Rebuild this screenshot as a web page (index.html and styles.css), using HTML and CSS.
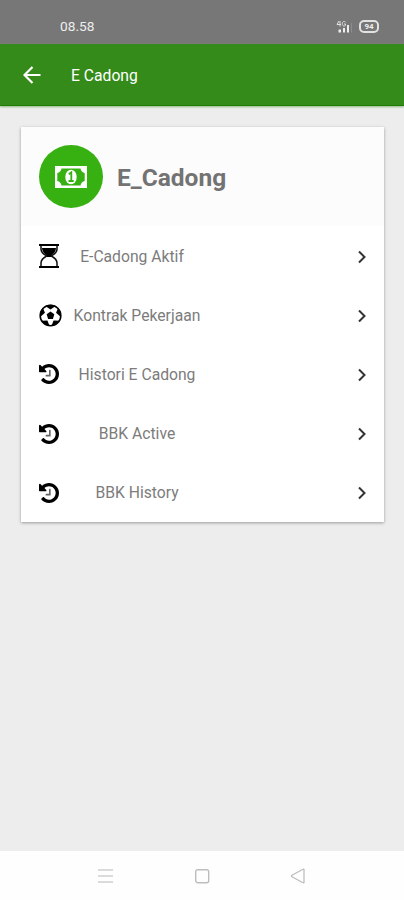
FILE: index.html
```html
<!DOCTYPE html>
<html lang="id">
<head>
<meta charset="utf-8">
<title>E Cadong</title>
<link rel="stylesheet" href="styles.css">
</head>
<body>
<svg class="defs" aria-hidden="true">
  <symbol id="history" viewBox="0 128 1536 1536"><path d="M1536 896q0 156-61 298t-164 245-245 164-298 61q-172 0-327-72.5t-264-204.5q-7-10-6.5-22.5t8.5-20.5l137-138q10-9 25-9 16 2 23 12 73 95 179 147t225 52q104 0 198.500-40.500t163.500-109.500 109.500-163.500 40.500-198.500-40.500-198.500-109.500-163.500-163.500-109.500-198.500-40.500q-98 0-188 35.500t-160 101.500l137 138q31 30 14 69-17 40-59 40h-448q-26 0-45-19t-19-45v-448q0-42 40-59 39-17 69 14l130 129q107-101 244.500-156.500t284.500-55.500q156 0 298 61t245 164 164 245 61 298z"/><path opacity=".6" d="M896 608v448q0 14-9 23t-23 9h-320q-14 0-23-9t-9-23v-64q0-14 9-23t23-9h224v-352q0-14 9-23t23-9h64q14 0 23 9t9 23z"/></symbol>
  <symbol id="chevron" viewBox="0 0 10 14"><path d="M2 1.500 7.500 7 2 12.500" fill="none" stroke="#333" stroke-width="2"/></symbol>
</svg>
<div class="screen">
  <div class="status">
    <span class="clock">08.58</span>
    <span class="indicators">
      <svg width="16" height="14" viewBox="0 0 16 14"><path d="M3 1 1 4.500h4M4 1v5.500M9.500 2.200C8 .5 6.300 1.800 6.300 3.800s2 3.200 3.200 1.500V4H8" fill="none" stroke="#e0e0e0"/><path d="M2.500 9.500h2.500v3H2.500zM7 8h2v4.500H7zM11 5h2v7.500h-2z" fill="#eee"/><path d="M15 3h1v9.500h-1z" fill="#8c8c8c"/></svg>
      <span class="battery">94</span>
    </span>
  </div>
  <header class="appbar">
    <svg width="18" height="18" viewBox="0 0 18 18"><path d="M17.500 9H2M9.500 1 1.500 9l8 8" fill="none" stroke="#fff" stroke-width="2.200"/></svg>
    <h1>E Cadong</h1>
  </header>
  <main class="content">
    <section class="card">
      <div class="card-head">
        <span class="avatar">
          <svg width="32" height="22" viewBox="0 0 32 22"><path fill="#fff" fill-rule="evenodd" d="M0 0h32v22H0zM6.500 2.500C6 5 4.500 6.500 2.300 7v8c2.200.5 3.700 2 4.200 4.500h19c.5-2.500 2-4 4.200-4.500V7c-2.200-.5-3.700-2-4.200-4.500z"/><ellipse cx="16" cy="11" rx="5.700" ry="7.300" fill="#fff"/><path d="m13.800 8.300 2.500-2v8.500M13.500 15h5.200" fill="none" stroke="#37b012" stroke-width="1.800"/></svg>
        </span>
        <h2>E_Cadong</h2>
      </div>
      <ul class="menu">
        <li>
          <span class="icon hourglass"><svg width="20" height="24" viewBox="0 0 20 24"><path d="M0 1h20M0 23h20" stroke="#000" stroke-width="2"/><path d="M2 2v3c0 3 3 5.500 5.700 7C5 13.500 2 16 2 19v3M18 2v3c0 3-3 5.500-5.700 7 2.700 1.500 5.700 4 5.700 7v3" fill="none" stroke="#111" stroke-width="1.500"/><path d="M3 4h14c0 3-2 5.500-5 7.500v1.500H8v-1.500C5 9.500 3 7 3 4z"/></svg></span>
          <span class="label">E-Cadong Aktif</span><svg class="chevron"><use href="#chevron"/></svg>
        </li>
        <li>
          <span class="icon"><svg width="23" height="23" viewBox="0 0 24 24"><circle cx="12" cy="12" r="10.800" fill="#fff" stroke="#000" stroke-width="1.600"/><path d="m12 7.800 4 3-1.500 4.900h-5L8 10.800zM6.500 2.200 12 5.800l5.500-3.600Q12-.5 6.500 2.200zM20 4l-2.200 5.200 5.200 4.500Q23.300 8 20 4zM4 4l2.200 5.200L1 13.700Q.7 8 4 4zM21.200 17.500l-6-.4-2.200 5.900Q18 22.500 21.200 17.500zM2.800 17.500l6-.4 2.200 5.900Q6 22.500 2.800 17.500z"/></svg></span>
          <span class="label">Kontrak Pekerjaan</span><svg class="chevron"><use href="#chevron"/></svg>
        </li>
        <li><span class="icon"><svg width="20" height="20"><use href="#history"/></svg></span><span class="label">Histori E Cadong</span><svg class="chevron"><use href="#chevron"/></svg></li>
        <li><span class="icon"><svg width="20" height="20"><use href="#history"/></svg></span><span class="label">BBK Active</span><svg class="chevron"><use href="#chevron"/></svg></li>
        <li><span class="icon"><svg width="20" height="20"><use href="#history"/></svg></span><span class="label">BBK History</span><svg class="chevron"><use href="#chevron"/></svg></li>
      </ul>
    </section>
  </main>
  <nav class="navbar">
    <svg width="16" height="16" viewBox="0 0 16 16"><path d="M0 2h15M0 8h15M0 14h15" stroke="#d0d0d0" stroke-width="1.700"/></svg>
    <svg width="16" height="16" viewBox="0 0 16 16"><rect x="1.700" y="1.700" width="13" height="13" rx="2" fill="none" stroke="#bdbdbd" stroke-width="1.400"/></svg>
    <svg width="16" height="16" viewBox="0 0 16 16"><path d="M14 1.500v13q-.5.500-1.500 0L1.500 8.500v-1l11-6q1-.5 1.500 0z" fill="none" stroke="#bdbdbd" stroke-width="1.300" stroke-linejoin="round"/></svg>
  </nav>
</div>
</body>
</html>
```
FILE: styles.css
```css
* { box-sizing: border-box; }
body { margin: 0; font-family: Roboto, sans-serif; color: #777; }
h1, h2, ul { margin: 0; padding: 0; }
svg { display: block; flex: none; }
.defs { display: none; }
.screen { height: 900px; display: flex; flex-direction: column; background: #ededed; overflow: hidden; }
.status { height: 44px; flex: none; background: #777; color: #eee; display: flex; justify-content: space-between; padding: 17px 25px 0 60px; }
.clock { font-size: 13.700px; line-height: 18px; }
.indicators { display: flex; gap: 7px; padding-top: 3px; }
.battery { width: 20px; height: 13px; border: 2px solid #e2e2e2; border-radius: 5px; font-size: 8px; line-height: 9px; font-weight: 700; text-align: center; }
.appbar { height: 62px; flex: none; display: flex; align-items: center; gap: 30px; padding: 1px 23px 0; background: #348b19; border-bottom: 1px solid #237c08; box-shadow: 0 1px 2px #8fb786; color: #fff; }
.appbar h1 { font-size: 15.700px; font-weight: 400; line-height: 20px; padding-top: 2px; }
.content { flex: 1; padding: 21px 20px 0 21px; }
.card { height: 395px; background: #fff; box-shadow: 0 1px 3px rgba(0, 0, 0, .35); width: 363px; }
.card-head { height: 99px; display: flex; align-items: center; gap: 14px; padding-left: 18px; background: #fcfcfc; }
.avatar { width: 64px; height: 63px; border-radius: 50%; background: #37b012; display: flex; align-items: center; justify-content: center; }
.card-head h2 { font-size: 24.500px; line-height: 32px; font-weight: 700; color: #737373; padding-top: 3px; }
.menu { list-style: none; padding-top: 1px; }
.menu li { height: 59.200px; display: flex; align-items: center; padding: 0 18px; }
.icon { width: 29px; flex: none; margin-top: -1px; }
.hourglass { width: 24px; }
.label { width: 138px; margin-top: -1px; text-align: center; font-size: 15.700px; white-space: nowrap; color: #7c7c7c; }
.chevron { width: 10px; height: 14px; margin-left: auto; margin-right: -1px; }
.navbar { height: 49px; flex: none; background: #fefefe; display: flex; justify-content: center; align-items: center; gap: 80px; }
```
